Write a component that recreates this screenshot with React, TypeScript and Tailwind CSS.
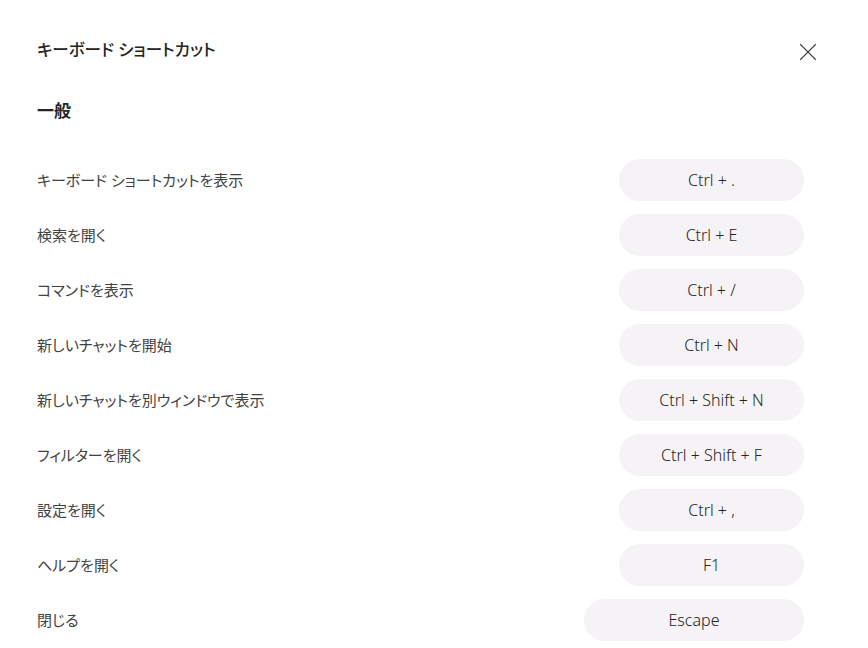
import { X } from "lucide-react";

const shortcuts = [
  { label: "キーボード ショートカットを表示", keys: "Ctrl + ." },
  { label: "検索を開く", keys: "Ctrl + E" },
  { label: "コマンドを表示", keys: "Ctrl + /" },
  { label: "新しいチャットを開始", keys: "Ctrl + N" },
  { label: "新しいチャットを別ウィンドウで表示", keys: "Ctrl + Shift + N" },
  { label: "フィルターを開く", keys: "Ctrl + Shift + F" },
  { label: "設定を開く", keys: "Ctrl + ," },
  { label: "ヘルプを開く", keys: "F1" },
  { label: "閉じる", keys: "Escape", wide: true },
];

export default function App() {
  return (
    <div
      className="h-[648px] w-[868px] overflow-hidden bg-white pl-[37px] pr-[64px] text-[#242424]"
      style={{ fontFamily: '"Noto Sans", "Noto Sans CJK JP", sans-serif', fontFeatureSettings: '"palt"' }}
    >
      <header className="flex h-[100px] items-start justify-between pt-[37px]">
        <h1 className="text-[16.5px] font-medium leading-[26px]">キーボード ショートカット</h1>
        <button className="mr-[-19px] mt-[0px] text-[#424242]">
          <X className="size-[30px]" strokeWidth={0.9} />
        </button>
      </header>
      <h2 className="text-[17px] font-bold leading-[22px]">一般</h2>
      <div className="mt-[37px] flex flex-col gap-[13px]">
        {shortcuts.map((s) => (
          <div key={s.label} className="flex h-[42px] items-center justify-between">
            <span className="text-[15px] text-[#424242]">{s.label}</span>
            <span
              className={`flex h-[42px] items-center justify-center rounded-full bg-[#f5f3f5] text-[16px] font-light text-[#242424] ${
                s.wide ? "w-[220px]" : "w-[185px]"
              }`}
            >
              {s.keys}
            </span>
          </div>
        ))}
      </div>
    </div>
  );
}
